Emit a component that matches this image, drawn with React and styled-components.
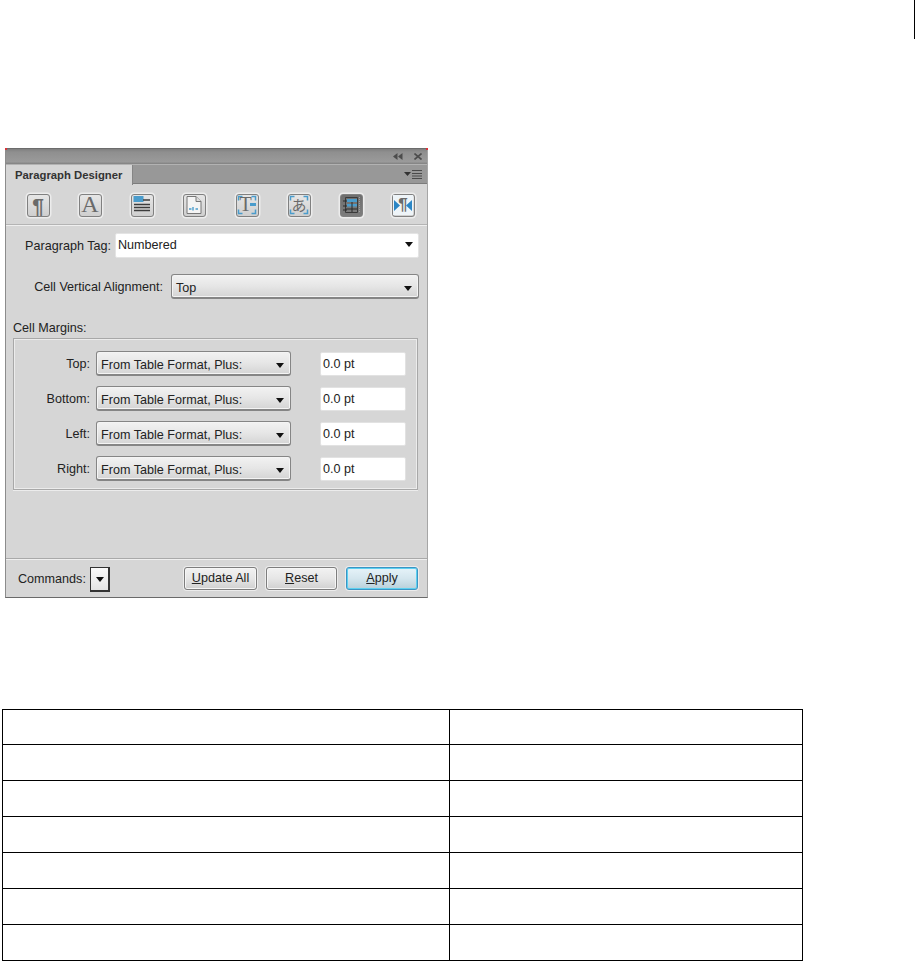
import React from 'react'
import styled, { createGlobalStyle } from 'styled-components'

const Global = createGlobalStyle`
  html, body { margin: 0; padding: 0; background: #fff; }
  body { font-family: "Liberation Sans", Arial, sans-serif; }
`

const Page = styled.div`
  width: 915px;
  height: 961px;
  display: flex;
  flex-direction: column;
  overflow: hidden;
`
const Tick = styled.div`
  align-self: flex-end;
  width: 1px;
  height: 40px;
  background: #000;
`
const Panel = styled.section`
  position: relative;
  box-sizing: border-box;
  width: 423px;
  height: 450px;
  margin: 109px 0 0 5px;
  display: flex;
  flex-direction: column;
  flex: none;
  background: #d6d6d6;
  border-left: 1px solid #8c8c8c;
  border-right: 1px solid #a6a6a6;
  border-bottom: 1px solid #6a6a6a;
  color: #222;
  font-size: 12.6px;
  &::before, &::after {
    content: '';
    position: absolute;
    top: 0;
    width: 2px;
    height: 2px;
    background: #d8333a;
  }
  &::before { left: -1px; }
  &::after { right: -1px; }
`
const TitleBar = styled.div`
  box-sizing: border-box;
  height: 16px;
  display: flex;
  align-items: center;
  justify-content: flex-end;
  gap: 11px;
  padding-right: 5px;
  background: linear-gradient(#7f7f7f, #8f8f8f 20%, #9a9a9a 85%, #808080);
  border-top: 1px solid #6c6c6c;
`
const TabStrip = styled.div`
  box-sizing: border-box;
  height: 20px;
  display: flex;
  align-items: stretch;
  justify-content: space-between;
  padding-right: 5px;
  background: #989898;
  border-top: 1px solid #b2b2b2;
  border-bottom: 1px solid #7c7c7c;
`
const Tab = styled.div`
  box-sizing: border-box;
  width: 127px;
  height: 20px;
  padding: 4px 0 0 9px;
  background: #d6d6d6;
  border-right: 1px solid #858585;
  font-size: 11.3px;
  font-weight: bold;
  color: #333;
  white-space: nowrap;
`
const MenuIcon = styled.svg`
  align-self: center;
  display: block;
`
const Toolbar = styled.div`
  box-sizing: border-box;
  height: 42px;
  display: flex;
  align-items: center;
  justify-content: space-between;
  padding: 3px 12px 1px 21px;
  border-bottom: 1px solid #efefef;
  box-shadow: inset 0 -1px 0 #b4b4b4;
`
const ToolButton = styled.div`
  box-sizing: border-box;
  width: 23px;
  height: 23px;
  border: 1.5px solid #808080;
  border-radius: 3px;
  background: ${p => (p.$active ? 'linear-gradient(#6e6e6e, #7d7d7d)' : 'linear-gradient(#e6e6e6, #cfcfcf)')};
  box-shadow: 0 0 0 1.5px #ececec;
  svg { display: block; overflow: visible; }
`
const Content = styled.div`
  flex: 1;
  display: flex;
  flex-direction: column;
  padding: 7px 8px 0 7px;
`
const Row = styled.div`
  display: flex;
  align-items: center;
  gap: ${p => p.$gap || 4}px;
  margin-bottom: ${p => p.$after || 0}px;
`
const Label = styled.label`
  flex: none;
  width: ${p => p.$width}px;
  text-align: right;
  white-space: nowrap;
`
const TagField = styled.div`
  box-sizing: border-box;
  flex: 1;
  height: 25px;
  display: flex;
  align-items: center;
  justify-content: space-between;
  padding: 0 5px 2px 2px;
  background: #fff;
  border: 1px solid #e4e4e4;
  border-radius: 2px;
`
const Select = styled.div`
  box-sizing: border-box;
  flex: ${p => (p.$width ? 'none' : 1)};
  width: ${p => (p.$width ? `${p.$width}px` : 'auto')};
  height: 25px;
  display: flex;
  align-items: center;
  justify-content: space-between;
  padding: 4px 6px 0 4px;
  border: 1px solid #858585;
  border-bottom-width: 2px;
  border-radius: 3px;
  background: linear-gradient(#f2f2f2, #e6e6e6 50%, #d4d4d4);
  box-shadow: inset 0 0 0 1px #f4f4f4;
  white-space: nowrap;
`
const Caret = styled.span`
  flex: none;
  width: 0;
  height: 0;
  border-left: 4.5px solid transparent;
  border-right: 4.5px solid transparent;
  border-top: 5px solid #111;
`
const GroupLabel = styled.div`
  margin: 0 0 3px 0;
  height: 14px;
  line-height: 14px;
`
const GroupBox = styled.div`
  box-sizing: border-box;
  width: 405px;
  height: 152px;
  display: flex;
  flex-direction: column;
  gap: 10px;
  padding: 12px 0 0 5px;
  border: 1px solid #a8a8a8;
  box-shadow: inset 0 0 0 1px #ececec, 0 1px 0 #ececec;
`
const ValueField = styled.div`
  box-sizing: border-box;
  width: 86px;
  height: 24px;
  margin: 0 0 0 23px;
  padding: 4px 0 0 2px;
  background: #fff;
  border: 1px solid #e2e2e2;
  border-radius: 2px;
`
const Footer = styled.div`
  box-sizing: border-box;
  height: 39px;
  display: flex;
  align-items: flex-start;
  padding: 8px 9px 0 12px;
  border-top: 1px solid #a9a9a9;
  box-shadow: inset 0 1px 0 #efefef;
`
const FooterLabel = styled.span`
  width: 72px;
  margin-top: 5px;
  white-space: nowrap;
`
const MenuButton = styled.div`
  box-sizing: border-box;
  width: 20px;
  height: 25px;
  display: flex;
  align-items: center;
  justify-content: center;
  background: linear-gradient(#fbfbfb, #e3e3e3);
  border: 1px solid #333;
  border-bottom-width: 2px;
  border-right-width: 2px;
  margin-right: auto;
`
const Button = styled.button`
  box-sizing: border-box;
  width: ${p => p.$width}px;
  height: 23px;
  margin-left: 9px;
  padding: 0 0 1px;
  font: inherit;
  color: #222;
  border: 1px solid ${p => (p.$primary ? '#3a94c4' : '#7d7d7d')};
  border-radius: 3px;
  background: ${p => (p.$primary
    ? 'linear-gradient(#e6f3f9, #d4e6ee 50%, #b8d0da)'
    : 'linear-gradient(#f2f2f2, #e6e6e6 50%, #d0d0d0)')};
  box-shadow: 0 0 0 1px #ececec, inset 0 0 0 1px ${p => (p.$primary ? '#5cd0f0' : '#f6f6f6')};
`
const Table = styled.table`
  box-sizing: border-box;
  flex: none;
  width: 801px;
  height: 252px;
  margin: 111px 0 0 2px;
  border-collapse: collapse;
  table-layout: fixed;
  td { border: 1px solid #000; padding: 0; height: 35px; }
  tr:first-child td { height: 34px; }
  td:first-child { width: 446px; }
`

const blue = '#4a9ccc'
const ink = '#6a6a6a'

const Corners = () => (
  <path
    d="M1.500 5.500v-4h4M14.500 1.500h4v4M1.500 14.500v4h4M14.500 18.500h4v-4"
    fill="none"
    stroke={blue}
    strokeWidth="1.500"
  />
)

const icons = [
  <text key="p" x="10" y="18" textAnchor="middle" fontFamily="Liberation Sans" fontWeight="bold" fontSize="21" fill={ink}>¶</text>,
  <text key="a" x="10" y="17" textAnchor="middle" fontFamily="Liberation Serif" fontSize="24" fill={ink}>A</text>,
  <g key="l">
    <rect x="1.500" y="1" width="10" height="6" fill={blue} />
    <path d="M11 5h7M2 9.500h16M2 12.500h16M2 15.500h16" stroke="#3c3c3c" strokeWidth="1.600" />
  </g>,
  <g key="d">
    <path d="M3 1.500h9l5 5v12h-14z" fill="#f4f4f4" stroke="#777" />
    <path d="M12 1.500v5h5" fill="#dcdcdc" stroke="#777" />
    <path d="M5 14h2.500M9 12v3.500M11.500 14h2.500" stroke={blue} strokeWidth="1.400" />
  </g>,
  <g key="t">
    <Corners />
    <text x="8.500" y="16" textAnchor="middle" fontFamily="Liberation Serif" fontSize="20" fill={ink}>T</text>
    <rect x="13" y="8" width="6" height="3" fill={blue} />
  </g>,
  <g key="j">
    <Corners />
    <text x="10" y="15.500" textAnchor="middle" fontFamily="Noto Sans CJK JP" fontSize="15" fill={ink}>あ</text>
  </g>,
  <g key="c">
    <path d="M4.500 2.500h12v15h-12z" fill="none" stroke="#3a3a3a" />
    <rect x="6" y="4" width="10" height="3" fill={blue} />
    <rect x="6" y="9" width="10" height="2.500" fill={blue} />
    <path d="M2 6h4M2 11h4M2 15h4M11 7v10M5 14h11" stroke="#2a2a2a" strokeWidth="1" />
    <path d="M18.500 2v16" stroke="#a0a0a0" strokeDasharray="1 1" />
  </g>,
  <g key="s">
    <rect x="0" y="0" width="20" height="20" fill="#eef4f8" />
    <text x="10" y="15" textAnchor="middle" fontFamily="Liberation Sans" fontWeight="bold" fontSize="17" fill={ink}>¶</text>
    <path d="M1 5l6 5.500-6 5.500zM19 5l-6 5.500 6 5.500z" fill="#2b86c5" />
  </g>,
]

const margins = ['Top', 'Bottom', 'Left', 'Right']

const App = () => (
  <Page>
    <Global />
    <Tick />
    <Panel>
      <TitleBar>
        <svg width="10" height="7" viewBox="0 0 10 7">
          <path d="M4.500 0v7L0 3.500zM9.500 0v7L5 3.500z" fill="#4c4c4c" />
        </svg>
        <svg width="8" height="7" viewBox="0 0 8 7">
          <path d="M.5.500l7 6M7.500.500l-7 6" stroke="#4c4c4c" strokeWidth="1.600" />
        </svg>
      </TitleBar>
      <TabStrip>
        <Tab>Paragraph Designer</Tab>
        <MenuIcon width="18" height="9" viewBox="0 0 18 9">
          <path d="M0 2h7L3.500 6z" fill="#333" />
          <path d="M8 .5h10M8 3.500h10M8 6h10M8 8.500h10" stroke="#4a4a4a" />
        </MenuIcon>
      </TabStrip>
      <Toolbar>
        {icons.map((icon, i) => (
          <ToolButton key={i} $active={i === 6}>
            <svg width="20" height="20" viewBox="0 0 20 20">{icon}</svg>
          </ToolButton>
        ))}
      </Toolbar>
      <Content>
        <Row $after={16}>
          <Label $width={98}>Paragraph Tag:</Label>
          <TagField>
            Numbered
            <Caret />
          </TagField>
        </Row>
        <Row $gap={8} $after={22}>
          <Label $width={150}>Cell Vertical Alignment:</Label>
          <Select>
            Top
            <Caret />
          </Select>
        </Row>
        <GroupLabel>Cell Margins:</GroupLabel>
        <GroupBox>
          {margins.map(name => (
            <Row key={name} $gap={6}>
              <Label $width={71}>{name}:</Label>
              <Select $width={195}>
                From Table Format, Plus:
                <Caret />
              </Select>
              <ValueField>0.0 pt</ValueField>
            </Row>
          ))}
        </GroupBox>
      </Content>
      <Footer>
        <FooterLabel>Commands:</FooterLabel>
        <MenuButton><Caret /></MenuButton>
        <Button $width={73}><u>U</u>pdate All</Button>
        <Button $width={71}><u>R</u>eset</Button>
        <Button $width={72} $primary><u>A</u>pply</Button>
      </Footer>
    </Panel>
    <Table>
      <tbody>
        {[0, 1, 2, 3, 4, 5, 6].map(r => (
          <tr key={r}>
            <td />
            <td />
          </tr>
        ))}
      </tbody>
    </Table>
  </Page>
)

export default App
